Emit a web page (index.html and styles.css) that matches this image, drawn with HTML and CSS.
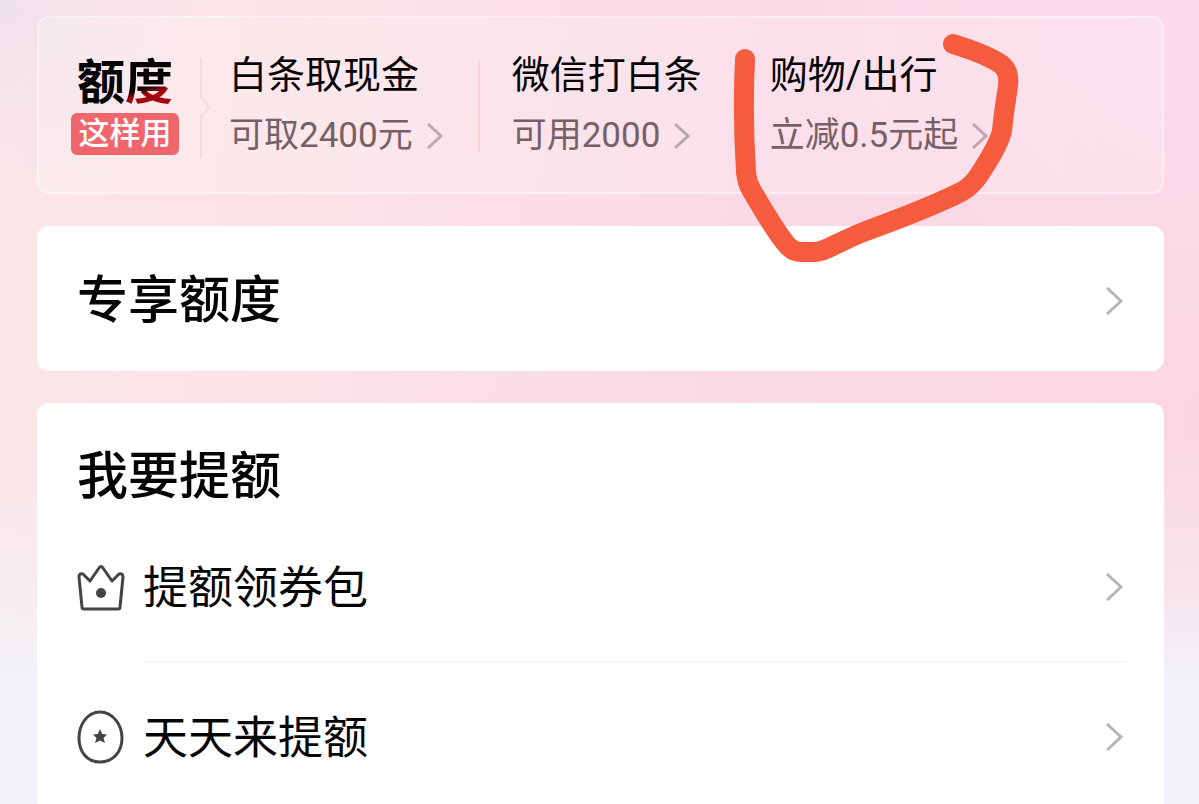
FILE: index.html
```html
<!DOCTYPE html>
<html lang="zh-CN">
<head>
    <meta charset="UTF-8">
    <title>白条额度</title>
    <meta name="viewport" content="width=device-width, initial-scale=1.0">
    <link rel="stylesheet" href="styles.css">
</head>
<body>
    <main class="page">
        <section class="card quick">
            <div class="quick-label">
                <span class="quick-title">额<span class="shade">度</span></span>
                <span class="quick-badge">这样用</span>
            </div>
            <svg class="bracket" viewBox="0 0 12 100"><path d="M2 0V39L10 49L2 59V100"/></svg>
            <a class="quick-item" href="#">
                <span class="name">白条取现金</span>
                <span class="desc">可取2400元 <svg class="arrow small" viewBox="0 0 18 28"><path d="M2 2L15 14L2 26"/></svg></span>
            </a>
            <a class="quick-item" href="#">
                <span class="name">微信打白条</span>
                <span class="desc">可用2000 <svg class="arrow small" viewBox="0 0 18 28"><path d="M2 2L15 14L2 26"/></svg></span>
            </a>
            <a class="quick-item" href="#">
                <span class="name">购物/出行</span>
                <span class="desc">立减0.5元起 <svg class="arrow small" viewBox="0 0 18 28"><path d="M2 2L15 14L2 26"/></svg></span>
            </a>
            <!-- hand-drawn mark around the third item -->
            <svg class="mark" viewBox="0 0 300 260">
                <path d="M18 49C16 90 17 130 19 162Q20 173 25 181C36 200 46 217 56 230Q64 242 74 242H87Q92 242 99 239C113 233 123 227 139 221C169 210 202 198 234 182Q245 176 252 165C262 150 272 134 275 121C277 100 279 90 281 76Q283 59 272 53Q258 44 226 34"/>
            </svg>
        </section>

        <a class="card exclusive" href="#">
            <h2>专享额度</h2>
            <svg class="arrow" viewBox="0 0 18 28"><path d="M1 1L15 14L1 27"/></svg>
        </a>

        <section class="card raise">
            <h2>我要提额</h2>
            <ul>
                <li>
                    <a href="#">
                        <svg class="icon" viewBox="0 0 48 54">
                            <path d="M7 49Q5 49 5 47L2 17Q2 13 6 14L13 21L22 8Q24 5 26 8L35 21L42 14Q46 13 46 17L43 47Q43 49 41 49Z"/>
                            <circle class="solid" cx="24" cy="33" r="5"/>
                        </svg>
                        <span class="row-text">提额领券包</span>
                        <svg class="arrow" viewBox="0 0 18 28"><path d="M1 1L15 14L1 27"/></svg>
                    </a>
                </li>
                <li>
                    <a href="#">
                        <svg class="icon" viewBox="0 0 48 54">
                            <path d="M23 2C36 2 45 15 45 28C45 42 36 52 23 52C10 52 2 42 2 28C2 15 10 2 23 2Z"/>
                            <path class="solid" d="M23 19L25.200 24L30 24.500L26.500 28L28 33L23 30.500L18 33L19.500 28L16 24.500L20.800 24Z"/>
                        </svg>
                        <span class="row-text">天天来提额</span>
                        <svg class="arrow" viewBox="0 0 18 28"><path d="M1 1L15 14L1 27"/></svg>
                    </a>
                </li>
            </ul>
        </section>
    </main>
</body>
</html>
```
FILE: styles.css
```css
* {
    box-sizing: border-box;
}
body {
    margin: 0;
    font-family: Roboto, "Noto Sans CJK SC", sans-serif;
    color: #050505;
    background-color: #f2f2f8;
    background-image:
        linear-gradient(to bottom, rgba(242,242,248,0) 440px, rgba(242,242,248,0.5) 590px, #f2f2f8 680px),
        radial-gradient(circle at 0 0, #efe1ec, rgba(239,225,236,0) 200px),
        radial-gradient(circle at 100% 0, #fadbec, rgba(250,219,236,0) 400px),
        linear-gradient(100deg, #fbe7e8 0%, #fce2e7 25%, #fad9e7 58%, #fbd6e1 100%);
}
a {
    color: inherit;
    text-decoration: none;
}
h2 {
    margin: 0;
    font-size: 51px;
    font-weight: 500;
    line-height: 60px;
}
ul {
    margin: 0;
    padding: 0;
    list-style: none;
}
.page {
    display: flex;
    flex-direction: column;
    gap: 32px;
    padding: 16px 35px 0 37px;
}
.card {
    background: #fff;
    border-radius: 12px;
}
.quick {
    position: relative;
    display: flex;
    align-items: flex-start;
    height: 178px;
    padding: 32px;
    border: 2px solid rgba(255,255,255,0.4);
    background: rgba(255,255,255,0.2);
}
.quick-label {
    display: flex;
    flex-direction: column;
    align-items: center;
    width: 108px;
    margin-right: 20px;
    padding-top: 3px;
}
.quick-title {
    font-size: 48px;
    font-weight: 700;
    line-height: 60px;
}
.shade {
    background: linear-gradient(165deg, #050505 56%, #a30610 66%);
    background-clip: text;
    -webkit-background-clip: text;
    color: transparent;
}
.quick-badge {
    width: 100%;
    border-radius: 6px;
    background: #f0666d;
    color: #fff;
    font-size: 31px;
    font-weight: 500;
    line-height: 42px;
    text-align: center;
    white-space: nowrap;
}
.bracket {
    width: 12px;
    height: 100px;
    margin: 8px 18px 0 0;
    fill: none;
    stroke: #f8d9df;
    stroke-width: 2;
}
.quick-item {
    position: relative;
    display: flex;
    flex-direction: column;
    gap: 12px;
    padding-top: 1px;
    padding-right: 34px;
    white-space: nowrap;
}
.quick-item + .quick-item {
    padding-left: 34px;
}
.quick-item + .quick-item::before {
    content: "";
    position: absolute;
    left: 0;
    top: 10px;
    width: 2px;
    height: 92px;
    background: #f9d3da;
}
.name {
    font-size: 38px;
    line-height: 48px;
}
.desc {
    display: flex;
    align-items: center;
    gap: 13px;
    font-size: 35px;
    line-height: 50px;
    color: #766068;
}
.arrow {
    width: 18px;
    height: 28px;
    margin-left: auto;
    fill: none;
    stroke: #b6b6b6;
    stroke-width: 3;
}
.arrow.small {
    margin-left: 0;
    stroke: #bba6b0;
}
.mark {
    position: absolute;
    left: 688px;
    top: -8px;
    width: 300px;
    height: 260px;
    fill: none;
    stroke: #f55b3d;
    stroke-width: 20;
    stroke-linecap: round;
    stroke-linejoin: round;
    pointer-events: none;
    z-index: 1;
}
.exclusive {
    display: flex;
    align-items: center;
    padding: 45px 40px 40px;
}
.raise {
    padding: 44px 38px 0 40px;
}
.raise li a {
    display: flex;
    align-items: center;
    height: 150px;
    padding-right: 2px;
}
.raise h2 {
    margin-bottom: 5px;
}
.raise li {
    position: relative;
}
.raise li + li::before {
    content: "";
    position: absolute;
    left: 66px;
    right: 0;
    top: -1px;
    height: 2px;
    background: #f4f4f4;
}
.icon {
    width: 48px;
    height: 54px;
    margin-right: 18px;
    fill: none;
    stroke: #444;
    stroke-width: 3;
    stroke-linejoin: round;
}
.icon .solid {
    fill: #444;
    stroke: none;
}
.row-text {
    padding-top: 4px;
    font-size: 45px;
    line-height: 60px;
}
```
